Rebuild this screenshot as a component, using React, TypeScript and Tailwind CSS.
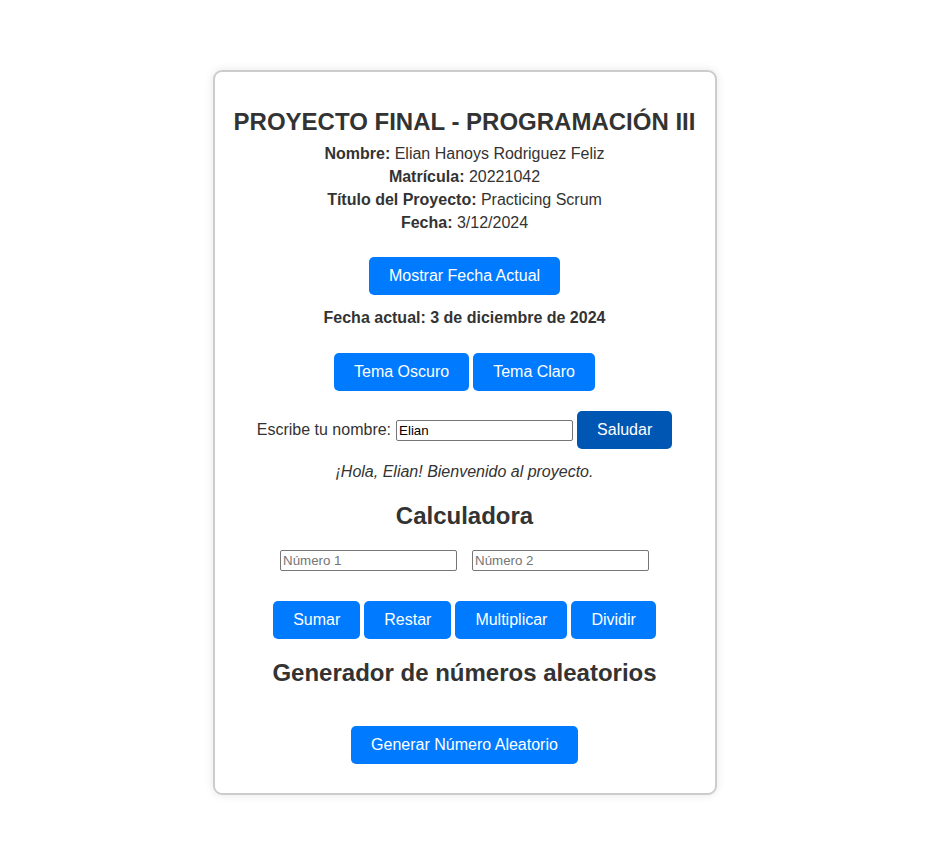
import React, { useState } from 'react';

const btn =
  'inline-block h-[38px] px-5 rounded-[5px] bg-[#007bff] text-white text-base leading-[18px] cursor-pointer';

const App: React.FC = () => {
  const [nombre, setNombre] = useState('Elian');
  const [n1, setN1] = useState('');
  const [n2, setN2] = useState('');

  return (
    <div className="min-h-[865px] bg-white pt-[70px] font-['Liberation_Sans',Arial,sans-serif] text-[#333]">
      <div className="mx-auto w-[504px] rounded-[9px] border-2 border-[#ccc] px-5 pt-5 pb-[29px] text-center shadow-[0_0_10px_rgba(0,0,0,0.1)]">
        <h1 className="-mx-3 mt-4 whitespace-nowrap text-2xl leading-[28px] font-bold">PROYECTO FINAL - PROGRAMACIÓN III</h1>
        <div className="mt-[6px] text-base leading-[23px]">
          <p><b>Nombre:</b> Elian Hanoys Rodriguez Feliz</p>
          <p><b>Matrícula:</b> 20221042</p>
          <p><b>Título del Proyecto:</b> Practicing Scrum</p>
          <p><b>Fecha:</b> 3/12/2024</p>
        </div>

        <div className="mt-[23px]">
          <button className={btn}>Mostrar Fecha Actual</button>
        </div>
        <p className="mt-[14px] text-base leading-[18px] font-bold">Fecha actual: 3 de diciembre de 2024</p>

        <div className="mt-[26px] flex justify-center gap-1">
          <button className={btn}>Tema Oscuro</button>
          <button className={btn}>Tema Claro</button>
        </div>

        <div className="mt-5 flex items-center justify-center gap-1">
          <label className="text-base">Escribe tu nombre:</label>
          <input
            value={nombre}
            onChange={e => setNombre(e.target.value)}
            className="ml-[1px] h-[21px] w-[177px] rounded-[2px] border border-[#767676] px-0.5 text-[13.33px] text-black"
          />
          <button className="h-[38px] px-5 rounded-[5px] bg-[#0056b3] text-white text-base">Saludar</button>
        </div>

        <p className="mt-[14px] text-base leading-[18px] italic">¡Hola, {nombre}! Bienvenido al proyecto.</p>

        <h2 className="mt-[21px] text-2xl leading-[28px] font-bold">Calculadora</h2>
        <div className="mt-5 flex justify-center gap-[15px]">
          <input
            type="number"
            placeholder="Número 1"
            value={n1}
            onChange={e => setN1(e.target.value)}
            className="h-[21px] w-[177px] rounded-[2px] border border-[#767676] px-0.5 text-[13.33px] placeholder:text-[#757575]"
          />
          <input
            type="number"
            placeholder="Número 2"
            value={n2}
            onChange={e => setN2(e.target.value)}
            className="h-[21px] w-[177px] rounded-[2px] border border-[#767676] px-0.5 text-[13.33px] placeholder:text-[#757575]"
          />
        </div>
        <div className="mt-[30px] flex justify-center gap-1">
          <button className={btn}>Sumar</button>
          <button className={btn}>Restar</button>
          <button className={btn}>Multiplicar</button>
          <button className={btn}>Dividir</button>
        </div>

        <h2 className="mt-5 text-2xl leading-[28px] font-bold">Generador de números aleatorios</h2>
        <div className="mt-[39px]">
          <button className={btn}>Generar Número Aleatorio</button>
        </div>
      </div>
    </div>
  );
};

export default App;
